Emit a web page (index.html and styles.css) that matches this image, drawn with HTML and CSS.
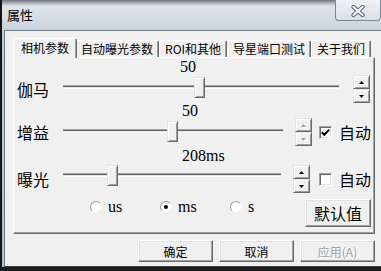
FILE: index.html
```html
<!DOCTYPE html>
<html lang="zh-CN">
<head>
  <meta charset="UTF-8">
  <title>属性</title>
  <link rel="stylesheet" href="styles.css">
</head>
<body>
  <div class="window">
    <!-- Title bar -->
    <div class="titlebar">
      <span class="title">属性</span>
      <div class="close-btn">
        <svg width="14" height="12" viewBox="0 0 14 12">
          <path d="M2.5 2 L11.5 10 M11.5 2 L2.5 10" stroke="#5b626b" stroke-width="4.2" stroke-linecap="round"/>
          <path d="M2.5 2 L11.5 10 M11.5 2 L2.5 10" stroke="#fff" stroke-width="2.2" stroke-linecap="round"/>
        </svg>
      </div>
    </div>

    <div class="client">
      <ul class="tabs">
        <li class="tab active">相机参数</li>
        <li class="tab">自动曝光参数</li>
        <li class="tab">ROI和其他</li>
        <li class="tab">导星端口测试</li>
        <li class="tab">关于我们</li>
      </ul>

      <div class="panel">
        <!-- Gamma -->
        <div class="value value-gamma">50</div>
        <div class="param-row">
          <span class="param-label">伽马</span>
          <div class="slider slider-gamma">
            <div class="track"></div>
            <div class="thumb" style="--pos: 0.494"></div>
          </div>
          <div class="spin spin-gamma">
            <span class="spin-btn"><svg class="arrow" viewBox="0 0 5 3"><path d="M0 3h5L2.5 0z"/></svg></span>
            <span class="spin-btn"><svg class="arrow" viewBox="0 0 5 3"><path d="M0 0h5L2.5 3z"/></svg></span>
          </div>
        </div>

        <!-- Gain -->
        <div class="value value-gain">50</div>
        <div class="param-row">
          <span class="param-label">增益</span>
          <div class="slider slider-gain">
            <div class="track"></div>
            <div class="thumb" style="--pos: 0.5"></div>
          </div>
          <div class="spin spin-gain disabled">
            <span class="spin-btn"><svg class="arrow" viewBox="0 0 5 3"><path d="M0 3h5L2.5 0z"/></svg></span>
            <span class="spin-btn"><svg class="arrow" viewBox="0 0 5 3"><path d="M0 0h5L2.5 3z"/></svg></span>
          </div>
          <span class="check check-gain">
            <svg width="11" height="11" viewBox="0 0 11 11"><path d="M1.8 5.2 L4.3 7.8 L9.2 2.6" fill="none" stroke="#000" stroke-width="2"/></svg>
          </span>
          <span class="auto-label">自动</span>
        </div>

        <!-- Exposure -->
        <div class="value value-exposure">208ms</div>
        <div class="param-row row-exposure">
          <span class="param-label">曝光</span>
          <div class="slider slider-exposure">
            <div class="track"></div>
            <div class="thumb" style="--pos: 0.214"></div>
          </div>
          <div class="spin spin-exposure">
            <span class="spin-btn"><svg class="arrow" viewBox="0 0 5 3"><path d="M0 3h5L2.5 0z"/></svg></span>
            <span class="spin-btn"><svg class="arrow" viewBox="0 0 5 3"><path d="M0 0h5L2.5 3z"/></svg></span>
          </div>
          <span class="check check-exposure"></span>
          <span class="auto-label">自动</span>
        </div>

        <!-- Unit options -->
        <div class="options">
          <label class="radio-group"><span class="radio"></span><span class="radio-text">us</span></label>
          <label class="radio-group"><span class="radio checked"></span><span class="radio-text">ms</span></label>
          <label class="radio-group"><span class="radio"></span><span class="radio-text">s</span></label>
          <button class="btn btn-default">默认值</button>
        </div>
      </div>

      <div class="actions">
        <button class="btn">确定</button>
        <button class="btn">取消</button>
        <button class="btn" disabled>应用(A)</button>
      </div>
    </div>
  </div>
</body>
</html>
```

FILE: styles.css
```css
/* Reset */
* {
  margin: 0;
  padding: 0;
  box-sizing: border-box;
}
body {
  width: 381px;
  height: 271px;
  overflow: hidden;
  background: #1b1b1b;
  font-family: "Noto Sans CJK SC", sans-serif;
  font-size: 12px;
  color: #000;
}
/* Window frame */
.window {
  width: 381px;
  height: 267px;
  border-left: 2px solid #151515;
  background: linear-gradient(#c3ccd5, #b3bdc7);
  display: flex;
  flex-direction: column;
}
.titlebar {
  height: 30px;
  flex-shrink: 0;
  display: flex;
  align-items: flex-start;
  padding-left: 5px;
  background: linear-gradient(#6e757e 0, #a7b0ba 3px, #dde3e9 6px, #d5dce3 20px, #c9d2db 30px);
}
.title {
  font-size: 13px;
  line-height: 14px;
  margin-top: 8px;
}
.close-btn {
  margin-left: auto;
  width: 46px;
  height: 21px;
  border: 1px solid #7d8894;
  border-top: none;
  border-radius: 0 0 4px 4px;
  background: linear-gradient(#eef2f6, #d9e0e7);
  display: flex;
  align-items: center;
  justify-content: center;
  padding-top: 2px;
}
/* Client area */
.client {
  flex: 1;
  margin-left: 2px;
  background: #f0f0f0;
  border-top: 1px solid #6f7a86;
  border-left: 1px solid #6f7a86;
  border-bottom: 1px solid #3a3a3a;
  padding: 7px 6px 0 8px;
}
/* Tabs */
.tabs {
  list-style: none;
  display: flex;
  align-items: flex-end;
  height: 19px;
  padding-left: 2px;
}
.tab {
  height: 17px;
  line-height: 16px;
  padding: 0 5px;
  white-space: nowrap;
  background: #f0f0f0;
  border-top: 1px solid #fff;
  border-left: 1px solid #fff;
  border-right: 1px solid #696969;
  border-radius: 2px 2px 0 0;
  box-shadow: inset -1px 0 0 #a0a0a0;
}
.tab.active {
  position: relative;
  z-index: 1;
  height: 20px;
  line-height: 18px;
  padding: 0 7px;
  margin: 0 -2px -1px;
}
/* Tab page */
.panel {
  height: 177px;
  border: 1px solid;
  border-color: #fff #696969 #696969 #fff;
  box-shadow: inset -1px -1px 0 #a0a0a0;
  padding: 1px 3px 0 3px;
}
.value {
  font-family: "Liberation Serif", serif;
  font-size: 16px;
  line-height: 16px;
  height: 16px;
  padding-left: 165px;
}
.value-gamma {
  padding-left: 163px;
}
.value-gain {
  height: 15px;
}
.value-exposure {
  margin-top: 2px;
}
.param-row {
  display: flex;
  align-items: center;
  height: 28px;
}
.row-exposure {
  margin-top: 1px;
}
.param-label {
  width: 46px;
  font-size: 16px;
  line-height: 16px;
}
/* Trackbar */
.slider {
  position: relative;
  align-self: flex-start;
  height: 21px;
  margin-top: 2px;
}
.slider-gamma { width: 276px; }
.slider-gain { width: 220px; margin-top: 3px; }
.slider-exposure { width: 218px; margin-top: 0; }
.track {
  margin-top: 8px;
  height: 4px;
  background: linear-gradient(#a0a0a0 25%, #696969 25% 50%, #e3e3e3 50% 75%, #fff 75%);
}
.thumb {
  position: absolute;
  top: 0;
  left: calc(var(--pos) * (100% - 11px));
  width: 11px;
  height: 21px;
  background: #f0f0f0;
  border: 1px solid;
  border-color: #e3e3e3 #696969 #696969 #e3e3e3;
  box-shadow: inset 1px 1px 0 #fff, inset -1px -1px 0 #a0a0a0;
}
/* Spin buttons */
.spin {
  display: flex;
  flex-direction: column;
  width: 17px;
  height: 28px;
}
.spin-gamma { margin-left: 14px; }
.spin-gain { margin-left: 12px; }
.spin-exposure { margin-left: 12px; }
.spin-btn {
  flex: 1;
  display: flex;
  align-items: center;
  justify-content: center;
  background: #f0f0f0;
  border: 1px solid;
  border-color: #e3e3e3 #696969 #696969 #e3e3e3;
  box-shadow: inset 1px 1px 0 #fff, inset -1px -1px 0 #a0a0a0;
}
.arrow {
  width: 5px;
  height: 3px;
  fill: #000;
}
.spin.disabled .arrow {
  fill: #a0a0a0;
  filter: drop-shadow(1px 1px 0 #fff);
}
/* Check boxes */
.check {
  width: 13px;
  height: 13px;
  background: #fff;
  border: 1px solid;
  border-color: #a0a0a0 #fff #fff #a0a0a0;
  box-shadow: inset 1px 1px 0 #696969, inset -1px -1px 0 #e3e3e3;
  display: flex;
}
.check-gain { margin-left: 7px; }
.check-exposure { margin-left: 9px; }
.auto-label {
  margin-left: 7px;
  font-size: 16px;
  line-height: 16px;
}
/* Radio row */
.options {
  display: flex;
  align-items: flex-start;
  height: 28px;
  margin-top: 6px;
}
.radio-group {
  display: flex;
  align-items: center;
  width: 70px;
  height: 16px;
}
.radio-group:first-child {
  margin-left: 73px;
}
.radio {
  width: 12px;
  height: 12px;
  border-radius: 50%;
  background: #fff;
  border: 1px solid;
  border-color: #a0a0a0 #f4f4f4 #f4f4f4 #a0a0a0;
  display: flex;
  align-items: center;
  justify-content: center;
}
.radio.checked::before {
  content: "";
  width: 4px;
  height: 4px;
  border-radius: 50%;
  background: #000;
}
.radio-text {
  margin-left: 6px;
  font-family: "Liberation Serif", serif;
  font-size: 16px;
  line-height: 16px;
}
/* Push buttons */
.btn {
  font: inherit;
  color: #000;
  width: 75px;
  height: 22px;
  background: #f0f0f0;
  border: 1px solid;
  border-color: #fff #696969 #696969 #fff;
  box-shadow: inset -1px -1px 0 #a0a0a0, inset 1px 1px 0 #e3e3e3;
}
.btn:disabled {
  color: #a0a0a0;
  text-shadow: 1px 1px 0 #fff;
}
.btn-default {
  margin-left: auto;
  width: 66px;
  height: 28px;
  font-size: 16px;
}
.actions {
  display: flex;
  justify-content: flex-end;
  gap: 6px;
  margin-top: 6px;
}
```
